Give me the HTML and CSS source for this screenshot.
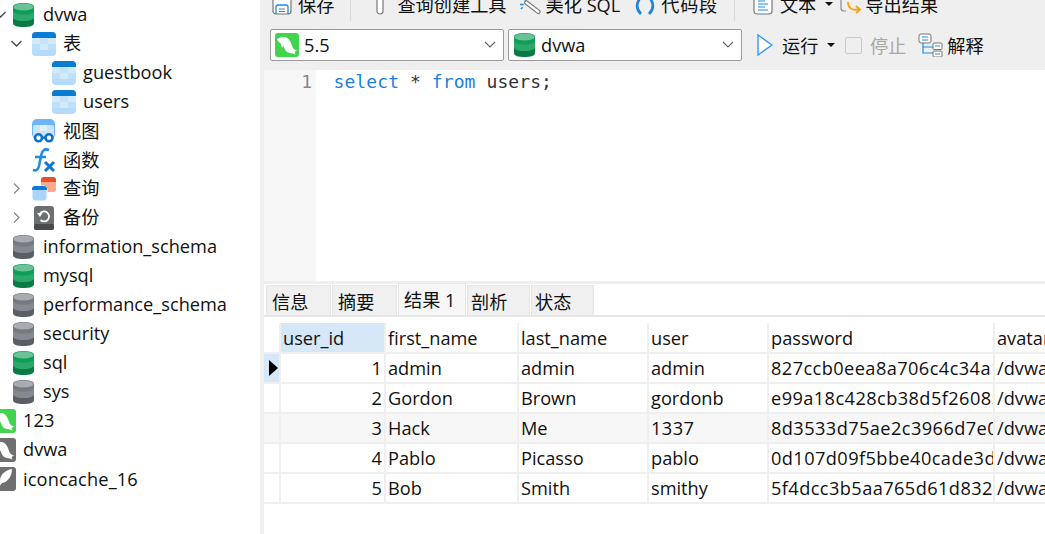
FILE: index.html
```html
<!DOCTYPE html>
<html lang="zh">
<head>
<meta charset="utf-8">
<title>dvwa</title>
<link rel="stylesheet" href="styles.css">
</head>
<body>
<svg class="defs" width="0" height="0">
  <symbol id="db" viewBox="0 0 21 24">
    <path d="M0 4C0 1 5 0 10.5 0S21 1 21 4V20C21 23 16 24 10.5 24S0 23 0 20Z" fill="currentColor"/>
    <ellipse cx="10.5" cy="4" rx="10" ry="3.600" fill="#fff" opacity=".38"/>
    <path d="M0 8.500C2 11 6 11.600 10.500 11.600S19 11 21 8.500V15C19 17.600 15 18 10.500 18S2 17.600 0 15Z" fill="#fff" opacity=".12"/>
    <path d="M0 15C2 17.600 6 18 10.500 18S19 17.600 21 15V20C21 23 16 24 10.500 24S0 23 0 20Z" fill="#000" opacity=".22"/>
  </symbol>
  <symbol id="tbl" viewBox="0 0 24 24">
    <rect width="24" height="24" rx="4" fill="#b5dbfa"/>
    <rect x="0" y="6" width="8" height="6" fill="#d3eafd"/>
    <rect x="8" y="6" width="8" height="6" fill="#c6e3fb"/>
    <rect x="16" y="6" width="8" height="6" fill="#d3eafd"/>
    <rect x="0" y="12" width="8" height="6" fill="#bfe0fb"/>
    <rect x="8" y="12" width="8" height="6" fill="#d3eafd"/>
    <rect x="16" y="12" width="8" height="6" fill="#bfe0fb"/>
    <path d="M4 0H20A4 4 0 0 1 24 4V6H0V4A4 4 0 0 1 4 0Z" fill="#0b7ad1"/>
  </symbol>
  <symbol id="dolphin" viewBox="0 0 24 24">
    <rect width="24" height="24" rx="3" fill="currentColor"/>
    <path d="M2 6C4 5 6 3.500 10 4C14 5 16 9 17 13C18 16 20 17 22 17.500L19.500 19L20.500 21.500C18 20 15.500 20.500 13 19.500C10 18 9.500 15 8.500 12.500L7 15L6 11C4.500 9.500 2.500 8 2 6Z" fill="#fff"/>
  </symbol>
</svg>
<div class="app">
  <nav class="tree">
    <div class="row lv1 open-clip"><svg class="chev clip-chev" viewBox="0 0 12 8"><path d="M1 1L6 6L11 1" fill="none" stroke="#444" stroke-width="1.300"/></svg><svg class="ic-db green"><use href="#db"/></svg><span>dvwa</span></div>
    <div class="row lv2"><svg class="chev" viewBox="0 0 12 8"><path d="M1 1L6 6L11 1" fill="none" stroke="#444" stroke-width="1.300"/></svg><svg class="ic"><use href="#tbl"/></svg><span>表</span></div>
    <div class="row lv3"><svg class="ic"><use href="#tbl"/></svg><span>guestbook</span></div>
    <div class="row lv3"><svg class="ic"><use href="#tbl"/></svg><span>users</span></div>
    <div class="row lv2"><svg class="ic" viewBox="0 0 24 24"><rect width="23" height="20" rx="5" fill="#6db5f6"/><rect x="1" y="6" width="21" height="12" rx="2" fill="#c9e4fc"/><rect x="8" y="6" width="7" height="6" fill="#e0f0fe"/><circle cx="6.500" cy="18.800" r="3.500" fill="#fff" stroke="#0b72c9" stroke-width="2.600"/><circle cx="17" cy="18.800" r="3.500" fill="#fff" stroke="#0b72c9" stroke-width="2.600"/><path d="M10 18.500H14" stroke="#0b72c9" stroke-width="2"/></svg><span class="cjk">视图</span></div>
    <div class="row lv2"><svg class="ic" viewBox="0 0 24 24"><path d="M17 2C12 0 10 3 9 8L7 18C6 22 4 23 1 22M3 9H14" fill="none" stroke="#1d8ce6" stroke-width="2.600"/><path d="M13 14L22 23M22 14L13 23" stroke="#0b7ad1" stroke-width="3"/></svg><span class="cjk">函数</span></div>
    <div class="row lv2"><svg class="chev side" viewBox="0 0 8 12"><path d="M1 1L6 6L1 11" fill="none" stroke="#888" stroke-width="1.300"/></svg><svg class="ic" viewBox="0 0 24 24"><rect x="9" y="0" width="15" height="15" rx="3" fill="#fba88e"/><path d="M12 0H21A3 3 0 0 1 24 3V5H9V3A3 3 0 0 1 12 0Z" fill="#e8502c"/><rect x="0" y="9" width="15" height="15" rx="3" fill="#a9d5fa" stroke="#fff"/><path d="M3 9H12A3 3 0 0 1 15 12V13H0V12A3 3 0 0 1 3 9Z" fill="#0b7ad1"/></svg><span>查询</span></div>
    <div class="row lv2"><svg class="chev side" viewBox="0 0 8 12"><path d="M1 1L6 6L1 11" fill="none" stroke="#888" stroke-width="1.300"/></svg><svg class="ic" viewBox="0 0 24 24"><rect x="2" width="20" height="24" rx="3" fill="#6a6f74"/><rect x="2" y="18" width="20" height="6" rx="2" fill="#474b4f"/><path d="M8 7.500A5 5 0 1 1 8.500 14" fill="none" stroke="#fff" stroke-width="1.800"/><path d="M5 7H10.500L8 11Z" fill="#fff"/></svg><span>备份</span></div>
    <div class="row lv1"><svg class="ic-db gray"><use href="#db"/></svg><span>information_schema</span></div>
    <div class="row lv1"><svg class="ic-db green"><use href="#db"/></svg><span>mysql</span></div>
    <div class="row lv1"><svg class="ic-db gray"><use href="#db"/></svg><span>performance_schema</span></div>
    <div class="row lv1"><svg class="ic-db gray"><use href="#db"/></svg><span>security</span></div>
    <div class="row lv1"><svg class="ic-db green"><use href="#db"/></svg><span>sql</span></div>
    <div class="row lv1"><svg class="ic-db gray"><use href="#db"/></svg><span>sys</span></div>
    <div class="row lv0"><svg class="ic lime"><use href="#dolphin"/></svg><span class="wide">123</span></div>
    <div class="row lv0"><svg class="ic slate"><use href="#dolphin"/></svg><span>dvwa</span></div>
    <div class="row lv0"><svg class="ic" viewBox="0 0 24 24"><rect width="24" height="24" rx="3" fill="#6f6f6f"/><path d="M20 2C13 3 8 8 8 14L5 22L10 16C16 15 20 9 20 2Z" fill="#fff"/></svg><span class="wide">iconcache_16</span></div>
  </nav>
  <div class="gutter-bar"></div>
  <main class="main">
    <div class="toolbar">
      <div class="tool"><svg class="tool-ic" viewBox="0 0 20 20"><rect x="1" y="-4" width="18" height="19" rx="3" fill="#fff" stroke="#777" stroke-width="1.200"/><path d="M4 15V8A2 2 0 0 1 6 6H14A2 2 0 0 1 16 8V15" fill="none" stroke="#1d8ce6" stroke-width="1.300"/><path d="M7 10H13M7 12.500H13" stroke="#777" stroke-width="1"/></svg><span>保存</span></div>
      <div class="sep first-sep"></div>
      <div class="tool t-query"><svg class="tool-ic small" viewBox="0 0 8 20"><rect x="1" y="-4" width="6" height="19" rx="3" fill="#fff" stroke="#777" stroke-width="1.200"/></svg><span>查询创建工具</span></div>
      <div class="tool t-beauty"><svg class="tool-ic" viewBox="0 0 24 20"><path d="M7 3L20 13" stroke="#777" stroke-width="5" stroke-linecap="round"/><path d="M7 3L20 13" stroke="#fff" stroke-width="2.600" stroke-linecap="round"/><path d="M0 5H4M6 0V2M1 10L3 8" stroke="#1d8ce6" stroke-width="1.600"/></svg><span>美化 SQL</span></div>
      <div class="tool t-snip"><svg class="tool-ic" viewBox="0 0 20 20"><path d="M6 -2C1 4 1 10 6 15M14 -2C19 4 19 10 14 15" fill="none" stroke="#1a86de" stroke-width="2.600"/></svg><span class="wider">代码段</span></div>
      <div class="sep"></div>
      <div class="tool t-text"><svg class="tool-ic" viewBox="0 0 20 20"><rect x="1" y="-3" width="18" height="18" rx="3" fill="#fff" stroke="#777" stroke-width="1.200"/><path d="M5 2H12M5 5H15M5 8H12M5 11H15" stroke="#1d8ce6" stroke-width="1.100"/></svg><span>文本</span><i class="caret"></i></div>
      <div class="tool t-export"><svg class="tool-ic" viewBox="0 0 24 20"><path d="M2 -2V9A3 3 0 0 0 5 12H7" fill="none" stroke="#888" stroke-width="1.200"/><path d="M9 3C9 9 13 12 20 10M17 7L21 10.500L17 14" fill="none" stroke="#f5a623" stroke-width="2"/></svg><span>导出结果</span></div>
    </div>
    <div class="bar">
      <div class="combo c-conn"><svg class="combo-ic lime"><use href="#dolphin"/></svg><span>5.5</span><svg class="arrow" viewBox="0 0 12 8"><path d="M1 1L6 6L11 1" fill="none" stroke="#666" stroke-width="1.200"/></svg></div>
      <div class="combo c-db"><svg class="ic-db green"><use href="#db"/></svg><span>dvwa</span><svg class="arrow" viewBox="0 0 12 8"><path d="M1 1L6 6L11 1" fill="none" stroke="#666" stroke-width="1.200"/></svg></div>
      <div class="act run"><svg class="run-ic" viewBox="0 0 16 22"><path d="M1 1L15 11L1 21Z" fill="#fff" stroke="#2196f3" stroke-width="1.300"/></svg><span>运行</span><i class="caret"></i></div>
      <div class="act stop"><i class="stop-box"></i><span>停止</span></div>
      <div class="act explain"><svg class="exp-ic" viewBox="0 0 26 24"><rect x="1" y="1" width="12" height="9" rx="2" fill="#fff" stroke="#777"/><path d="M4 4H10M4 7H10" stroke="#1d8ce6"/><path d="M5 10V20H15M5 14H15" fill="none" stroke="#1d8ce6" stroke-width="1.200"/><rect x="15" y="10" width="9" height="6.500" rx="1" fill="#fff" stroke="#777"/><rect x="15" y="18" width="9" height="6" rx="1" fill="#fff" stroke="#777"/><path d="M17 13H22M17 21H22" stroke="#1d8ce6"/></svg><span>解释</span></div>
    </div>
    <div class="editor">
      <div class="lines">1</div>
      <div class="code"><b>select</b> * <b>from</b> users;</div>
    </div>
    <div class="splitter"></div>
    <div class="tabs">
      <div class="tab">信息</div>
      <div class="tab">摘要</div>
      <div class="tab active">结果 1</div>
      <div class="tab t-narrow">剖析</div>
      <div class="tab t-narrow">状态</div>
    </div>
    <div class="grid-wrap">
      <table class="grid">
        <colgroup><col class="w0"><col class="w1"><col class="w2"><col class="w3"><col class="w4"><col class="w5"><col class="w6"></colgroup>
        <thead><tr><th class="corner"></th><th class="sel"><div>user_id</div></th><th><div>first_name</div></th><th><div>last_name</div></th><th><div>user</div></th><th><div>password</div></th><th><div>avatar</div></th></tr></thead>
        <tbody>
          <tr><td class="rh cur"><i class="tri"></i></td><td class="num"><div>1</div></td><td><div>admin</div></td><td><div>admin</div></td><td><div>admin</div></td><td class="hash"><div>827ccb0eea8a706c4c34a16891f84e7b</div></td><td><div>/dvwa/hackable/users/admin.jpg</div></td></tr>
          <tr><td class="rh"></td><td class="num"><div>2</div></td><td><div>Gordon</div></td><td><div>Brown</div></td><td><div>gordonb</div></td><td class="hash"><div>e99a18c428cb38d5f260853678922e03</div></td><td><div>/dvwa/hackable/users/gordonb.jpg</div></td></tr>
          <tr class="alt"><td class="rh"></td><td class="num"><div>3</div></td><td><div>Hack</div></td><td><div>Me</div></td><td class="hash"><div>1337</div></td><td class="hash"><div>8d3533d75ae2c3966d7e0d4fcc69216b</div></td><td><div>/dvwa/hackable/users/1337.jpg</div></td></tr>
          <tr><td class="rh"></td><td class="num"><div>4</div></td><td><div>Pablo</div></td><td><div>Picasso</div></td><td><div>pablo</div></td><td class="hash"><div>0d107d09f5bbe40cade3de5c71e9e9b7</div></td><td><div>/dvwa/hackable/users/pablo.jpg</div></td></tr>
          <tr><td class="rh"></td><td class="num"><div>5</div></td><td><div>Bob</div></td><td><div>Smith</div></td><td><div>smithy</div></td><td class="hash"><div>5f4dcc3b5aa765d61d8327deb882cf99</div></td><td><div>/dvwa/hackable/users/smithy.jpg</div></td></tr>
        </tbody>
      </table>
    </div>
  </main>
</div>
</body>
</html>
```
FILE: styles.css
```css
* { box-sizing: border-box; }
html, body { margin: 0; height: 100%; overflow: hidden; background: #fff; }
body { font-family: "Open Sans", "Noto Sans CJK SC", sans-serif; font-size: 18.200px; color: #111; }
.defs { display: block; height: 0; }
.app { display: flex; width: 1045px; height: 534px; overflow: hidden; }

.tree { width: 260px; flex: none; overflow: hidden; background: #fff; }
.row { display: flex; align-items: center; height: 29.040px; white-space: nowrap; }
.row span { line-height: 29px; }
.row .cjk { padding-top: 2px; }
.row .wide { letter-spacing: .15px; }
.lv0 { padding-left: 0; margin-left: -8px; }
.lv1 { padding-left: 13px; }
.lv2 { padding-left: 32px; }
.lv3 { padding-left: 52px; }
.ic { width: 24px; height: 24px; flex: none; margin-right: 7px; }
.ic-db { width: 21px; height: 24px; flex: none; margin-right: 9px; }
.green { color: #0f9d58; }
.gray { color: #737a80; }
.lime { color: #43d44f; }
.slate { color: #6f6f6f; }
.chev { width: 13px; height: 8px; flex: none; margin-left: -22px; margin-right: 9px; }
.chev.side { width: 8px; height: 13px; margin-left: -19px; margin-right: 11px; }
.clip-chev { margin-left: -19px; margin-right: 6px; }

.gutter-bar { width: 4px; flex: none; background: #f0f0f0; }
.main { flex: 1; min-width: 0; display: flex; flex-direction: column; background: #fff; }

.toolbar { height: 29px; flex: none; background: #efefef; display: flex; align-items: flex-start; padding-left: 8px; overflow: hidden; }
.tool { display: flex; align-items: flex-start; height: 20px; margin-top: -5px; white-space: nowrap; line-height: 20px; }
.tool-ic { width: 20px; height: 20px; flex: none; margin-top: 4px; margin-right: 6px; }
.tool-ic.small { width: 8px; margin-right: 13px; }
.sep { width: 1px; height: 21px; background: #d8d8d8; margin-left: 16px; margin-right: 14px; }
.first-sep { margin-right: 25px; }
.t-beauty { margin-left: 13px; }
.t-beauty .tool-ic { width: 22px; margin-right: 4px; }
.t-snip { margin-left: 15px; }
.wider { letter-spacing: .7px; }
.t-text { margin-left: 4px; }
.t-text .tool-ic { margin-right: 7px; }
.t-export { margin-left: 6px; }
.t-export .tool-ic { width: 24px; margin-right: 2px; }
.caret { display: inline-block; width: 0; height: 0; border: 4px solid transparent; border-top: 4px solid #111; border-bottom: 0; margin-left: 9px; align-self: center; }
.t-text .caret { margin-top: -2px; }

.bar { height: 41px; flex: none; background: #efefef; display: flex; align-items: flex-start; padding-left: 6px; }
.combo { display: flex; align-items: center; height: 32px; background: #fff; border: 1px solid #9b9b9b; border-radius: 2px; margin-right: 4px; }
.c-conn { width: 234px; padding-left: 4px; }
.c-db { width: 234px; padding-left: 5px; }
.combo-ic { width: 24px; height: 24px; flex: none; margin-right: 5px; }
.c-db .ic-db { margin-right: 6px; }
.arrow { width: 12px; height: 8px; margin-left: auto; margin-right: 7px; flex: none; }
.act { display: flex; align-items: center; height: 32px; white-space: nowrap; }
.run { margin-left: 11px; }
.run-ic { width: 16px; height: 22px; margin-right: 9px; }
.stop { margin-left: 10px; color: #a8a8a8; }
.stop-box { width: 17px; height: 17px; border: 1px solid #c9c9c9; border-radius: 2px; margin-right: 7.500px; }
.explain { margin-left: 12px; }
.exp-ic { width: 26px; height: 24px; margin-right: 3px; }

.editor { height: 211px; flex: none; display: flex; background: #fff; }
.lines { width: 52px; background: #f7f7f7; text-align: right; padding-right: 4px; font: 18px/24px "DejaVu Sans Mono", monospace; color: #888; }
.code { padding-left: 17.500px; font: 18px/24px "DejaVu Sans Mono", monospace; letter-spacing: .09px; color: #333; }
.code b { font-weight: 400; color: #1a7fe0; }

.splitter { height: 3px; flex: none; background: #efefef; }
.tabs { height: 33px; flex: none; display: flex; align-items: flex-end; padding-left: 2px; gap: 1px; background: #fff; border-bottom: 2px solid #e6e6e6; }
.tab { width: 65px; height: 30px; line-height: 32px; padding-left: 5px; background: #f0f0f0; border: 1px solid #e6e6e6; border-bottom: 0; white-space: nowrap; }
.tab.active { width: 68px; height: 32px; line-height: 32px; padding-left: 5px; background: #f7f7f7; }
.tab.t-narrow { width: 63px; padding-left: 3px; }

.grid-wrap { flex: 1; padding-top: 6px; overflow: hidden; }
.grid { table-layout: fixed; border-collapse: separate; border-spacing: 0; width: 791px; }
.w0 { width: 17px; }
.w1 { width: 105px; }
.w2 { width: 133px; }
.w3 { width: 130px; }
.w4 { width: 120px; }
.w5 { width: 226px; }
.w6 { width: 60px; }
.grid th, .grid td { padding: 0; font-weight: 400; text-align: left; overflow: hidden; white-space: nowrap; border-right: 2px solid #efefef; border-bottom: 2px solid #efefef; }
.grid th { height: 30px; }
.grid td { height: 30px; }
.grid th div { padding: 2px 0 0 2px; line-height: 27px; overflow: hidden; }
.grid td div { padding: 0 0 0 2px; line-height: 28px; overflow: hidden; }
.grid .sel { background: #d6e8f7; }
.grid .cur { background: #d6e8f7; }
.grid .num div { text-align: right; padding-right: 2px; }
.grid .hash div { letter-spacing: .42px; }
.alt td { background: #f7f7f7; }
.tri { display: block; width: 0; height: 0; margin-left: 5px; border-left: 9px solid #000; border-top: 8px solid transparent; border-bottom: 8px solid transparent; }
```
